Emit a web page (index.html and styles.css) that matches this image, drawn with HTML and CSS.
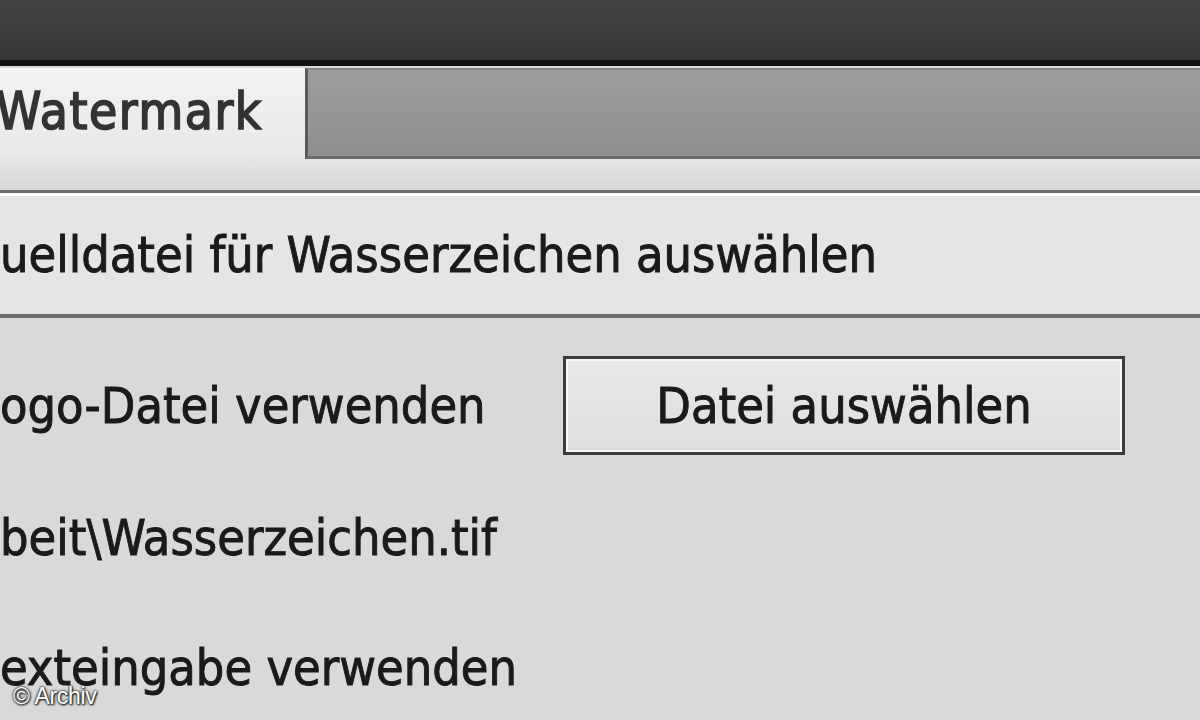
FILE: index.html
```html
<!DOCTYPE html>
<html lang="de">
<head>
<meta charset="utf-8">
<title>Watermark</title>
<link rel="stylesheet" href="styles.css">
</head>
<body>
<div class="app">
  <div class="titlebar"></div>
  <div class="tabs">
    <div class="tab active"><span class="tab-label">Watermark</span></div>
    <div class="tab-fill"></div>
  </div>
  <div class="strip"></div>
  <div class="section-head"><span class="txt">uelldatei für Wasserzeichen auswählen</span></div>
  <div class="content">
    <div class="row row-logo">
      <span class="txt label">ogo-Datei verwenden</span>
      <button class="btn"><span class="txt">Datei auswählen</span></button>
    </div>
    <div class="row row-path">
      <span class="txt">beit\Wasserzeichen.tif</span>
    </div>
    <div class="row row-text">
      <span class="txt">exteingabe verwenden</span>
    </div>
  </div>
  <div class="credit">© Archiv</div>
</div>
</body>
</html>
```
FILE: styles.css
```css
html, body {
  margin: 0;
  padding: 0;
  width: 1200px;
  height: 720px;
  overflow: hidden;
  background: #d9d9d9;
}

.app {
  position: relative;
  width: 1200px;
  height: 720px;
  display: flex;
  flex-direction: column;
  background: #d9d9d9;
  overflow: hidden;
}

.txt {
  font-family: "DejaVu Sans Condensed", "DejaVu Sans", sans-serif;
  font-stretch: condensed;
  font-size: 50px;
  color: #1a1a1a;
  -webkit-text-stroke: 0.9px #1a1a1a;
  white-space: nowrap;
}

.titlebar {
  height: 60px;
  flex: none;
  background: linear-gradient(#444444, #3f3f3f 50%, #363636);
  border-bottom: 6px solid #121212;
}

.tabs {
  height: 91px;
  flex: none;
  display: flex;
  background: #dcdcdc;
  padding-top: 2px;
}

.tab.active {
  width: 305px;
  flex: none;
  background: linear-gradient(#f2f2f2, #e8e8e8);
  border-top: 2px solid #fafafa;
  display: flex;
  align-items: center;
}

.tab-label {
  font-family: "DejaVu Sans Condensed", "DejaVu Sans", sans-serif;
  font-stretch: condensed;
  font-size: 51px;
  letter-spacing: 1.6px;
  color: #333333;
  -webkit-text-stroke: 1.6px #333333;
  margin-left: -4px;
  margin-bottom: 6px;
  white-space: nowrap;
}

.tab-fill {
  flex: 1;
  background: linear-gradient(#9c9c9c, #8f8f8f);
  border-left: 3px solid #5a5a5a;
  border-bottom: 3px solid #6a6a6a;
  border-top: 2px solid #888;
}

.strip {
  height: 31px;
  flex: none;
  background: linear-gradient(#e4e4e4, #d8d8d8);
  border-bottom: 3px solid #6c6c6c;
}

.section-head {
  height: 118px;
  flex: none;
  background: #e5e5e5;
  border-top: 3px solid #fbfbfb;
  border-bottom: 4px solid #6e6e6e;
  display: flex;
  align-items: center;
  box-sizing: content-box;
}

.content {
  flex: 1;
  display: flex;
  flex-direction: column;
  padding-top: 38px;
  background: #d9d9d9;
}

.row {
  display: flex;
  align-items: center;
}

.row-logo {
  height: 99px;
}

.label {
  width: 563px;
  flex: none;
}

.btn {
  width: 562px;
  height: 99px;
  flex: none;
  box-sizing: border-box;
  border: 3px solid #3c3c3c;
  background: linear-gradient(#e8e8e8, #dedede);
  box-shadow: inset 0 0 0 2px #f6f6f6;
  padding: 0;
  margin: 0;
  display: flex;
  align-items: center;
  justify-content: center;
}

.row-path {
  height: 60px;
  margin-top: 53px;
}

.row-text {
  height: 60px;
  margin-top: 70px;
}

.credit {
  position: absolute;
  left: 13px;
  bottom: 10px;
  font-family: "Liberation Sans", Arial, sans-serif;
  font-size: 23px;
  color: #ffffff;
  text-shadow: 0 0 2px #111, 0 0 3px #333, 1px 1px 2px #111;
  letter-spacing: -0.3px;
}
```
